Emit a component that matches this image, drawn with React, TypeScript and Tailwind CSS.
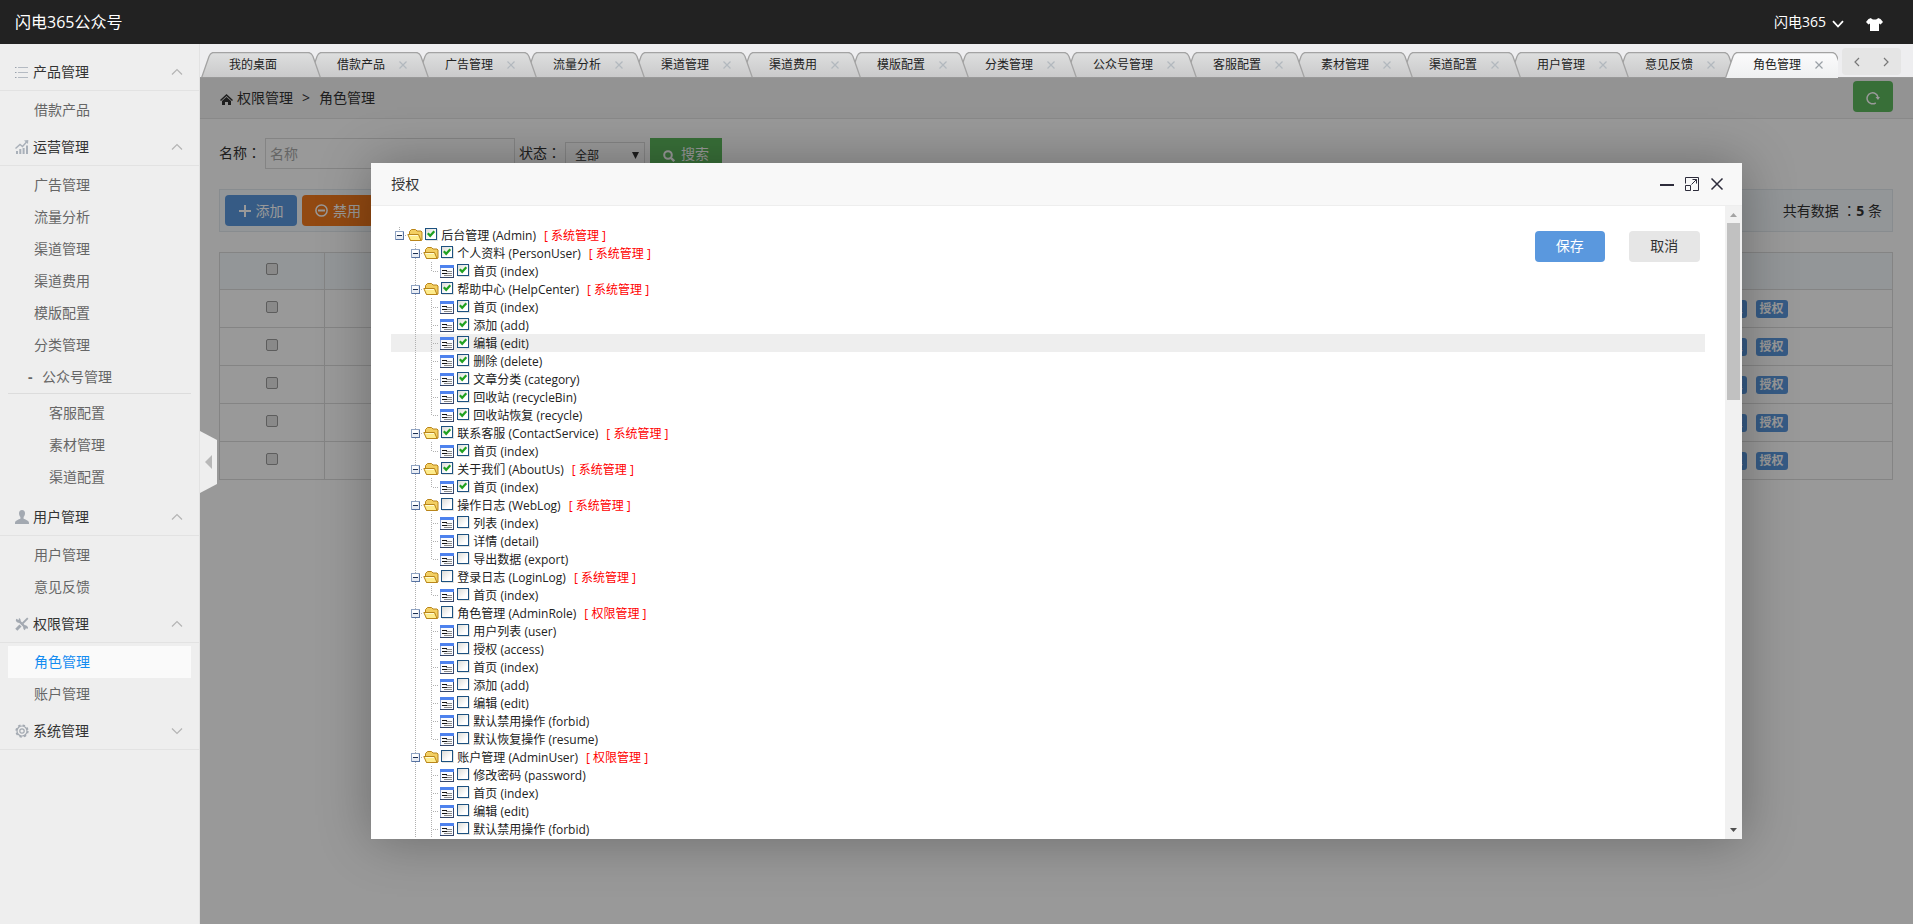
import { useId, type ReactNode } from "react";

/* ---------- sidebar icons ---------- */

const ListIcon = () => (
  <svg width="14" height="14" viewBox="0 0 14 14" stroke="#b4bac2" fill="none">
    <path d="M3 2.500h10M3 7.500h10M3 12.500h10" />
    <path d="M0 2.500h1.500M0 7.500h1.500M0 12.500h1.500" stroke="#9aa2ac" />
  </svg>
);

const ChartIcon = () => (
  <svg width="14" height="16" viewBox="0 0 14 16" fill="#a9b0b9">
    <path d="M1 12h2v3H1zM4.300 10h2v5h-2zM7.600 9h2v6h-2zM11 6.500h2V15h-2z" />
    <path d="M.5 9.500 5 5.500l2.500 2L12 2.500" fill="none" stroke="#a9b0b9" strokeWidth="1.400" />
    <path d="M9 1.500 13.300 1 13 5z" />
  </svg>
);

const PersonIcon = () => (
  <svg width="14" height="14" viewBox="0 0 14 14" fill="#a3a9b1">
    <path d="M7 0c2 0 3 1.400 3 3.300 0 1.500-.5 2.900-1.400 3.700v1.700c1.500.8 5.400 1.500 5.400 4.300V14H0v-1c0-2.800 3.900-3.500 5.400-4.300V7C4.500 6.200 4 4.800 4 3.300 4 1.400 5 0 7 0z" />
  </svg>
);

const ToolsIcon = () => (
  <svg width="14" height="14" viewBox="0 0 14 14" fill="#a3a9b1" stroke="#a3a9b1">
    <path d="M3.500 3.500 11 11" strokeWidth="2.400" fill="none" />
    <path d="M1.200 1.800A2.600 2.600 0 0 0 5 5.200 2.600 2.600 0 0 0 4 1L3.700 3z" stroke="none" />
    <path d="M12.900 11.800A2.600 2.600 0 0 0 9 8.800a2.600 2.600 0 0 0 1 4.400l.5-2z" stroke="none" />
    <path d="M7.500 6.500 12.800 1.200" strokeWidth="1.800" fill="none" />
    <path d="M1.300 12.700 5.500 8.500" strokeWidth="3" fill="none" />
  </svg>
);

const GearIcon = () => (
  <svg width="14" height="14" viewBox="0 0 14 14" fill="none" stroke="#a3a9b1">
    <circle cx="7" cy="7" r="5" strokeWidth="1.200" />
    <circle cx="7" cy="7" r="5.900" strokeWidth="1.500" strokeDasharray="2.400 2.230" />
    <circle cx="7" cy="7" r="2.200" strokeWidth="1.200" />
  </svg>
);

const Chevron = ({ d }: { d: string }) => (
  <svg width="12" height="8" viewBox="0 0 12 8" fill="none" stroke="#b4b4b4" strokeWidth="1.200">
    <path d={d} />
  </svg>
);

/* ---------- sidebar ---------- */

function MenuSection({ icon, title, closed, children }: { icon: ReactNode; title: string; closed?: boolean; children?: ReactNode }) {
  return (
    <section>
      <button type="button" className="flex h-10 w-full items-center border-b border-[#e2e2e2] pt-[2px] pr-4 pl-[15px] text-left text-[#333]">
        <span className="flex w-[18px]">{icon}</span>
        <span className="flex-1">{title}</span>
        <Chevron d={closed ? "M1 1.500 6 6.500 11 1.500" : "M1 6.500 6 1.500 11 6.500"} />
      </button>
      {children && <ul className="px-2 pt-[3px]">{children}</ul>}
    </section>
  );
}

function MenuItem({ label, active, nested }: { label: string; active?: boolean; nested?: boolean }) {
  return (
    <li>
      <a
        href="#"
        className={
          "block h-8 leading-[31px] " +
          (nested ? "pl-[41px] " : "pl-[26px] ") +
          (active ? "bg-[#fafafa] text-[#148cf1]" : "text-[#666]")
        }
      >
        {label}
      </a>
    </li>
  );
}

function Sidebar() {
  return (
    <nav className="w-[200px] shrink-0 border-r border-[#e2e2e2] bg-[#eee] pt-[7px]">
      <MenuSection icon={<ListIcon />} title="产品管理">
        <MenuItem label="借款产品" />
      </MenuSection>
      <MenuSection icon={<ChartIcon />} title="运营管理">
        {["广告管理", "流量分析", "渠道管理", "渠道费用", "模版配置", "分类管理"].map((t) => (
          <MenuItem key={t} label={t} />
        ))}
        <li>
          <a href="#" className="flex h-[33px] items-center border-b border-[#dcdcdc] pl-5 text-[#666]">
            <span className="w-[14px] font-bold">-</span>公众号管理
          </a>
          <ul className="py-[3px]">
            {["客服配置", "素材管理", "渠道配置"].map((t) => (
              <MenuItem key={t} label={t} nested />
            ))}
          </ul>
        </li>
      </MenuSection>
      <MenuSection icon={<PersonIcon />} title="用户管理">
        <MenuItem label="用户管理" />
        <MenuItem label="意见反馈" />
      </MenuSection>
      <MenuSection icon={<ToolsIcon />} title="权限管理">
        <MenuItem label="角色管理" active />
        <MenuItem label="账户管理" />
      </MenuSection>
      <MenuSection icon={<GearIcon />} title="系统管理" closed />
    </nav>
  );
}

/* ---------- tabs ---------- */

const tabs = [
  "我的桌面", "借款产品", "广告管理", "流量分析", "渠道管理", "渠道费用", "模版配置", "分类管理",
  "公众号管理", "客服配置", "素材管理", "渠道配置", "用户管理", "意见反馈", "角色管理",
];

function Tab({ label, index }: { label: string; index: number }) {
  const active = index === tabs.length - 1;
  const wide = label.length > 4;
  const w = wide ? 132 : 120;
  const h = active ? 26 : 25;
  return (
    <li className={"relative h-[26px] shrink-0 " + (wide ? "w-[120px]" : "w-[108px]")} style={{ zIndex: active ? 30 : 20 - index }}>
      <svg className="absolute top-0 left-0" width={w} height={h} viewBox={`0 0 ${w} ${h}`}>
        <defs>
          <linearGradient id={`tab-${index}`} x1="0" x2="0" y1="0" y2="1">
            <stop offset="0" stopColor={active ? "#fbfbfc" : "#dedfdf"} />
            <stop offset="1" stopColor={active ? "#eff0f1" : "#c9c9ca"} />
          </linearGradient>
        </defs>
        <path
          d={`M 0.5 26 L 8 4.5 Q 9.5 0.5 12.5 0.5 H ${w - 13} Q ${w - 9.5} 0.5 ${w - 8} 4.5 L ${w - 0.5} 26`}
          fill={`url(#tab-${index})`}
          stroke="#a3a3a3"
          strokeWidth="1.300"
        />
      </svg>
      <a href="#" className="relative flex h-[26px] items-center pl-7 text-xs text-[#222]">
        {label}
      </a>
      {index > 0 && (
        <button type="button" aria-label={`关闭${label}`} className="absolute top-2 right-[9px]">
          <svg width="10" height="10" viewBox="0 0 10 10" stroke={active ? "#9aa0a6" : "#b2b8be"} strokeWidth="1.200">
            <path d="M1.500 1.500l7 7M8.500 1.500l-7 7" />
          </svg>
        </button>
      )}
    </li>
  );
}

function TabBar() {
  return (
    <div className="flex h-[34px] items-end border-b border-[#999] bg-[#eeeef0] pl-px">
      <ul className="relative z-10 -mb-px flex min-w-0 flex-1 overflow-hidden">
        {tabs.map((t, i) => (
          <Tab key={t} label={t} index={i} />
        ))}
      </ul>
      <div className="mr-3 mb-[2px] ml-1 flex h-[27px] w-[59px] shrink-0 items-center justify-around self-end rounded bg-[#e5e5e5]">
        <button type="button" aria-label="向左">
          <svg width="8" height="12" viewBox="0 0 8 12" fill="none" stroke="#777" strokeWidth="1.200"><path d="M6 2 2 6l4 4" /></svg>
        </button>
        <button type="button" aria-label="向右">
          <svg width="8" height="12" viewBox="0 0 8 12" fill="none" stroke="#777" strokeWidth="1.200"><path d="m2 2 4 4-4 4" /></svg>
        </button>
      </div>
    </div>
  );
}

/* ---------- role list page ---------- */

/* The TC face centres the full-width colon in its cell. */
const Colon = () => <span className="font-['Noto_Sans_CJK_TC',sans-serif]">：</span>;

const Box = ({ label }: { label: string }) => (
  <input
    type="checkbox"
    aria-label={label}
    className="mx-auto mb-1 block size-3 appearance-none rounded-xs border border-[#9b9b9b] bg-[#e4e4e4]"
  />
);

function RolePage() {
  const name = useId();
  const status = useId();
  return (
    <div className="text-[#333]">
      <div className="flex h-[41px] items-center border-b border-[#e5e5e5] bg-[#f5f5f5] pr-5 pl-5">
        <svg className="mt-[2px] mr-1" width="13" height="11" viewBox="0 0 13 11" fill="#333">
          <path d="M6.500 0 13 6l-1 1-5.500-5L1 7 0 6z" />
          <path d="M6.500 3 11 7v4H8V8H5v3H2V7z" />
        </svg>
        <a href="#">权限管理</a>
        <span className="mx-[9px]">&gt;</span>
        <span className="flex-1">角色管理</span>
        <button type="button" aria-label="刷新" className="mb-1 flex h-[31px] w-10 items-center justify-center rounded bg-[#5eb95e]">
          <svg className="mt-1" width="14" height="14" viewBox="0 0 14 14" fill="none" stroke="#fff" strokeWidth="1.500">
            <path d="M9.800 11.800A5.500 5.500 0 1 1 12 6.500" />
            <path d="M9.500 6h4.500l-2 3z" fill="#fff" stroke="none" />
          </svg>
        </button>
      </div>

      <div className="px-5 pt-[19px] pl-[19px]">
        <div className="flex h-[31px] items-center">
          <label htmlFor={name} className="mb-[3px] w-[46px]">名称<Colon /></label>
          <input id={name} placeholder="名称" className="h-[31px] w-[250px] border border-[#ddd] bg-white px-1 placeholder:text-[#a9a9a9]" />
          <label htmlFor={status} className="mb-[3px] ml-1 w-[46px]">状态<Colon /></label>
          <span className="relative mt-1 block">
            <select id={status} className="h-7 w-20 appearance-none border border-[#ddd] bg-white pl-[9px] text-xs text-[#333]">
              <option>全部</option>
            </select>
            <svg className="pointer-events-none absolute top-[10px] right-[6px]" width="7" height="7" viewBox="0 0 7 7" fill="#333"><path d="M0 0h7L3.500 7z" /></svg>
          </span>
          <button type="button" className="ml-[5px] flex h-[31px] w-[72px] items-center justify-center gap-[6px] bg-[#5eb95e] text-white">
            <svg className="mt-1" width="12" height="12" viewBox="0 0 12 12" fill="none" stroke="#fff" strokeWidth="2"><circle cx="5" cy="5" r="3.800" /><path d="m8 8 3.200 3.200" strokeWidth="2.400" /></svg>
            搜索
          </button>
        </div>

        <div className="mt-5 flex h-[43px] items-center border border-[#e3eaef] bg-[#f5fafe] pr-[10px] pl-[5px]">
          <button type="button" className="mr-[5px] flex h-[31px] w-[72px] items-center justify-center gap-[5px] rounded bg-[#5a98de] text-white">
            <svg width="12" height="12" viewBox="0 0 12 12" stroke="#fff" strokeWidth="2"><path d="M6 0v12M0 6h12" /></svg>
            添加
          </button>
          <button type="button" className="flex h-[31px] w-[72px] items-center justify-center gap-[5px] rounded bg-[#f37b1d] text-white">
            <svg width="13" height="13" viewBox="0 0 13 13" fill="none" stroke="#fff" strokeWidth="1.500"><circle cx="6.500" cy="6.500" r="5.600" /><path d="M3 6.500h7" strokeWidth="2" /></svg>
            禁用
          </button>
          <p className="ml-auto">共有数据 <Colon /><b>5</b> 条</p>
        </div>

        <table className="mt-5 w-full table-fixed border-collapse border border-[#ddd]">
          <thead>
            <tr className="h-[37px] border-b border-[#ddd] bg-[#f5fafe]">
              <th className="w-[105px] border-r border-[#ddd]"><Box label="全选" /></th>
              <th />
              <th className="w-[200px]" />
            </tr>
          </thead>
          <tbody>
            {[1, 2, 3, 4, 5].map((n) => (
              <tr key={n} className="h-[38px] border-b border-[#ddd]">
                <td className="border-r border-[#ddd]"><Box label={`选择第${n}行`} /></td>
                <td />
                <td>
                  <span className="flex gap-[9px] pl-[22px] text-xs font-bold text-white">
                    <a href="#" className="h-[18px] w-8 rounded-[3px] bg-[#5a98de] text-center leading-[18px]">管理</a>
                    <a href="#" className="h-[18px] w-8 rounded-[3px] bg-[#5a98de] text-center leading-[18px]">授权</a>
                  </span>
                </td>
              </tr>
            ))}
          </tbody>
        </table>
      </div>
    </div>
  );
}

/* ---------- permission tree ---------- */

type Node = { level: 0 | 1 | 2; text: string; group?: string; checked?: boolean; last?: boolean; hover?: boolean };

const folder = (text: string, group: string, checked: boolean): Node => ({ level: 1, text, group, checked });
const leaves = (checked: boolean, open: boolean, ...names: string[]): Node[] =>
  names.map((text, i) => ({ level: 2, text, checked, last: !open && i === names.length - 1 }));

const nodes: Node[] = [
  { level: 0, text: "后台管理 (Admin)", group: "系统管理", checked: true },
  folder("个人资料 (PersonUser)", "系统管理", true),
  ...leaves(true, false, "首页 (index)"),
  folder("帮助中心 (HelpCenter)", "系统管理", true),
  ...leaves(true, false, "首页 (index)", "添加 (add)", "编辑 (edit)", "删除 (delete)", "文章分类 (category)", "回收站 (recycleBin)", "回收站恢复 (recycle)"),
  folder("联系客服 (ContactService)", "系统管理", true),
  ...leaves(true, false, "首页 (index)"),
  folder("关于我们 (AboutUs)", "系统管理", true),
  ...leaves(true, false, "首页 (index)"),
  folder("操作日志 (WebLog)", "系统管理", false),
  ...leaves(false, false, "列表 (index)", "详情 (detail)", "导出数据 (export)"),
  folder("登录日志 (LoginLog)", "系统管理", false),
  ...leaves(false, false, "首页 (index)"),
  folder("角色管理 (AdminRole)", "权限管理", false),
  ...leaves(false, false, "用户列表 (user)", "授权 (access)", "首页 (index)", "添加 (add)", "编辑 (edit)", "默认禁用操作 (forbid)", "默认恢复操作 (resume)"),
  folder("账户管理 (AdminUser)", "权限管理", false),
  ...leaves(false, true, "修改密码 (password)", "首页 (index)", "编辑 (edit)", "默认禁用操作 (forbid)"),
];
nodes[6].hover = true;

const dots = { stroke: "#b0b0b0", strokeDasharray: "1 1", fill: "none" };

const LineCell = () => (
  <svg width="16" height="18" viewBox="0 0 16 18" shapeRendering="crispEdges"><path d="M8.500 0V18" {...dots} /></svg>
);

const BranchCell = ({ last }: { last?: boolean }) => (
  <svg width="16" height="18" viewBox="0 0 16 18" shapeRendering="crispEdges">
    <path d={last ? "M8.500 0V10" : "M8.500 0V18"} {...dots} />
    <path d="M10 9.500H16" {...dots} />
  </svg>
);

const SwitchCell = ({ root }: { root: boolean }) => (
  <svg width="16" height="18" viewBox="0 0 16 18" shapeRendering="crispEdges">
    <path d={root ? "M8.500 1V5" : "M8.500 0V18"} {...dots} />
    <path d="M14 9.500h2" {...dots} />
    <rect x="4.500" y="5.500" width="8" height="8" fill="#e9edf4" stroke="#8fa3c2" />
    <path d="M5 6h6v3H5z" fill="#fff" />
    <path d="M5 13.500h7.500V6" fill="none" stroke="#5672a2" />
    <path d="M6 9.500h5" stroke="#1c2f52" />
  </svg>
);

const FolderCell = () => (
  <svg width="16" height="18" viewBox="0 0 16 18">
    <path d="M3.500 14.500 2.500 8V5.500L4.500 3.500h4l1.500 1.500h4l1 1V14l-1 .5z" fill="#f3cf62" stroke="#b9851a" />
    <path d="M.8 8.500H11.500l2.500 6H3.500z" fill="#feec8c" stroke="#b9851a" strokeLinejoin="round" />
    <path d="M2.500 9.500h8.500" stroke="#fffcd8" />
  </svg>
);

const DocCell = () => (
  <svg width="16" height="18" viewBox="0 0 16 18" shapeRendering="crispEdges">
    <rect x="1.500" y="3.500" width="13" height="12" fill="#fafbfe" stroke="#8ba3cf" />
    <path d="M1 4.500h14" stroke="#4d82ee" strokeWidth="3" />
    <path d="M1 15.500h14M14.500 6v10" stroke="#34466b" />
    <path d="M3 8.500h5M3 11.500h5" stroke="#111" />
    <path d="M7 9.500h6M8 11.500h5M5 13.500h8" stroke="#8a8a8a" />
  </svg>
);

function TreeRow({ node }: { node: Node }) {
  return (
    <li className={"flex h-[18px] items-center " + (node.hover ? "bg-[#eee]" : "")}>
      {node.level === 1 && <span className="w-4" />}
      {node.level === 2 && <><span className="w-4" /><LineCell /></>}
      {node.level === 2 ? <BranchCell last={node.last} /> : <SwitchCell root={node.level === 0} />}
      {node.level === 2 ? <DocCell /> : <FolderCell />}
      <label className="flex h-[18px] items-start whitespace-nowrap text-[#222]">
        <span className="relative mx-[2px] mt-[2px] flex size-3">
          <input
            type="checkbox"
            defaultChecked={node.checked}
            className="peer size-3 appearance-none border border-[#1c5180] bg-linear-to-br from-[#dcdcd7] to-white to-70% shadow-[1px_1px_0_#e4e4e0]"
          />
          <svg className="pointer-events-none absolute inset-0 hidden peer-checked:block" width="12" height="12" viewBox="0 0 12 12" fill="none" stroke="#21a121" strokeWidth="2.200">
            <path d="M2.800 5.200 5.200 7.800 9.300 3.200" />
          </svg>
        </span>
        <span className="ml-[2px] leading-5">{node.text}</span>
        {node.group && <span className="ml-2 leading-5 text-[#f00]">[ {node.group} ]</span>}
      </label>
    </li>
  );
}

function AuthDialog() {
  return (
    <div role="dialog" aria-label="授权" className="absolute top-[10%] left-[10%] flex h-4/5 w-4/5 flex-col bg-white shadow-[1px_1px_50px_rgba(0,0,0,0.3)]">
      <header className="flex h-[43px] shrink-0 items-center border-b border-[#eee] bg-[#f8f8f8] pr-[18px] pl-5 text-[#333]">
        <h2 className="flex-1">授权</h2>
        <div className="flex items-center gap-[11px]">
          <button type="button" aria-label="最小化">
            <svg width="14" height="14" viewBox="0 0 14 14"><path d="M0 8h14" stroke="#2d2c3b" strokeWidth="2" /></svg>
          </button>
          <button type="button" aria-label="最大化">
            <svg width="14" height="14" viewBox="0 0 14 14" fill="none" stroke="#2d2c3b">
              <path d="M.5 6.500V.5h13v13H8M.5 8.500h5v5h-5zM6.500 7.500l5-5M7.500 2.500h4v4" />
            </svg>
          </button>
          <button type="button" aria-label="关闭">
            <svg width="14" height="14" viewBox="0 0 14 14" stroke="#2d2c3b" strokeWidth="1.500"><path d="m1.500 1.500 11 11M12.500 1.500l-11 11" /></svg>
          </button>
        </div>
      </header>
      <div className="flex min-h-0 flex-1">
        <div className="relative min-w-0 flex-1 overflow-hidden px-5 pt-5">
          <ul className="text-xs">
            {nodes.map((n, i) => (
              <TreeRow key={i} node={n} />
            ))}
          </ul>
          <div className="absolute top-[25px] right-[25px] flex gap-6">
            <button type="button" className="h-[31px] w-[70px] rounded bg-[#5a98de] text-white">保存</button>
            <button type="button" className="h-[31px] w-[71px] rounded bg-[#e6e6e6] text-[#333]">取消</button>
          </div>
        </div>
        <div className="flex w-[17px] flex-col items-center bg-[#f1f1f1]" aria-hidden="true">
          <svg width="17" height="17" viewBox="0 0 17 17" fill="#a3a3a3"><path d="M5 11h7L8.500 7z" /></svg>
          <span className="h-[177px] w-[13px] bg-[#c1c1c1]" />
          <svg className="mt-auto" width="17" height="17" viewBox="0 0 17 17" fill="#505050"><path d="M5 6h7l-3.500 4z" /></svg>
        </div>
      </div>
    </div>
  );
}

export default function App() {
  return (
    <div className="flex h-screen flex-col overflow-hidden font-['Open_Sans','Noto_Sans_CJK_SC',sans-serif] text-sm">
      <header className="flex h-11 shrink-0 items-center bg-[#222] pr-[30px] pl-[15px] text-white">
        <h1 className="flex-1 text-base">闪电365公众号</h1>
        <button type="button" className="flex items-center gap-[6px]">
          闪电365
          <svg className="mt-1" width="12" height="8" viewBox="0 0 12 8" fill="none" stroke="#fff" strokeWidth="1.800"><path d="M1 1.200 6 6.500 11 1.200" /></svg>
        </button>
        <button type="button" aria-label="换肤" className="ml-[22px]">
          <svg className="mt-1" width="17" height="13" viewBox="0 0 17 13" fill="#fff">
            <path d="M5 0C6 2 11 2 12 0l2.500 1L17 4l-2.500 2.500L13 5.500V13H4V5.500L2.500 6.500 0 4l2.500-3z" />
          </svg>
        </button>
      </header>
      <div className="flex min-h-0 flex-1">
        <Sidebar />
        <div className="flex min-w-0 flex-1 flex-col">
          <TabBar />
          <main className="relative min-h-0 flex-1 bg-white">
            <RolePage />
            <div className="absolute inset-0 bg-black/40" />
            <AuthDialog />
          </main>
        </div>
      </div>
      <button type="button" aria-label="收起菜单" className="fixed top-1/2 left-[200px] -translate-y-1/2">
        <svg width="17" height="62" viewBox="0 0 17 62">
          <path d="M0 0 17 9V53L0 62z" fill="#eee" />
          <path d="M12 24V38L5 31z" fill="#b8b8b8" />
        </svg>
      </button>
    </div>
  );
}
